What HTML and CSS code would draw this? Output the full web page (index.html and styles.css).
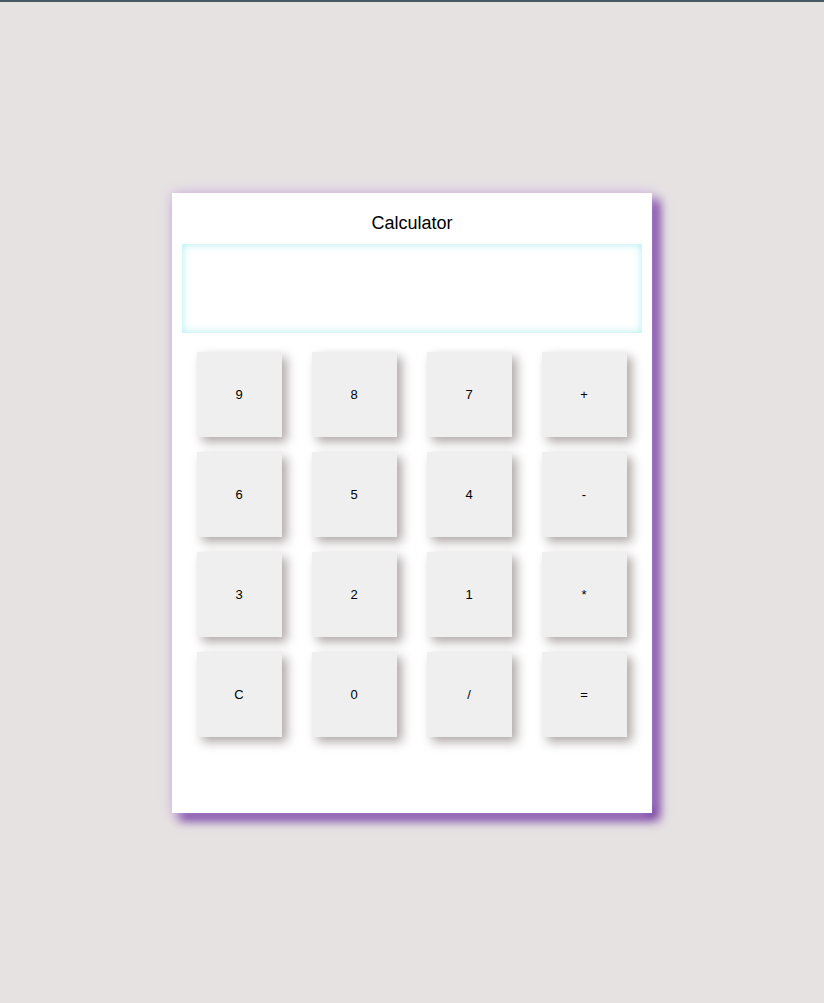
FILE: index.html
```html
<!DOCTYPE html>
<html>
<head>
<meta charset="utf-8">
<title>Calculator</title>
<link rel="stylesheet" href="styles.css">
</head>
<body>
<div class="page">
  <div class="calc">
    <div class="title">Calculator</div>
    <div class="display"></div>
    <div class="keys">
      <button class="key">9</button>
      <button class="key">8</button>
      <button class="key">7</button>
      <button class="key">+</button>
      <button class="key">6</button>
      <button class="key">5</button>
      <button class="key">4</button>
      <button class="key">-</button>
      <button class="key">3</button>
      <button class="key">2</button>
      <button class="key">1</button>
      <button class="key">*</button>
      <button class="key">C</button>
      <button class="key">0</button>
      <button class="key">/</button>
      <button class="key">=</button>
    </div>
  </div>
</div>
</body>
</html>
```
FILE: styles.css
```css
html, body {
  margin: 0;
  padding: 0;
}
body {
  background: #e6e2e2;
  border-top: 2px solid #455a64;
  font-family: "Liberation Sans", Arial, sans-serif;
  height: 1001px;
  overflow: hidden;
}
.page {
  display: flex;
  justify-content: center;
  padding-top: 191px;
}
.calc {
  width: 460px;
  height: 600px;
  padding: 10px;
  background: #ffffff;
  box-shadow: 0 0 12px #d2b6e2, 7px 7px 10px #5c1c92;
}
.title {
  text-align: center;
  font-size: 18px;
  line-height: 38px;
  padding-top: 1px;
  margin-bottom: 2px;
  color: #000;
}
.display {
  height: 89px;
  background: #fff;
  box-shadow: inset 0 0 10px #aeeef0;
}
.keys {
  display: grid;
  grid-template-columns: repeat(4, 85px);
  column-gap: 30px;
  row-gap: 15px;
  padding: 0 15px;
  margin-top: 19px;
}
.key {
  width: 85px;
  height: 85px;
  border: none;
  background: #efefef;
  font-family: "Liberation Sans", Arial, sans-serif;
  font-size: 13px;
  color: #000;
  padding: 0 1px 0 0;
  box-shadow: 5px 5px 10px #b0a8a8;
}
```
